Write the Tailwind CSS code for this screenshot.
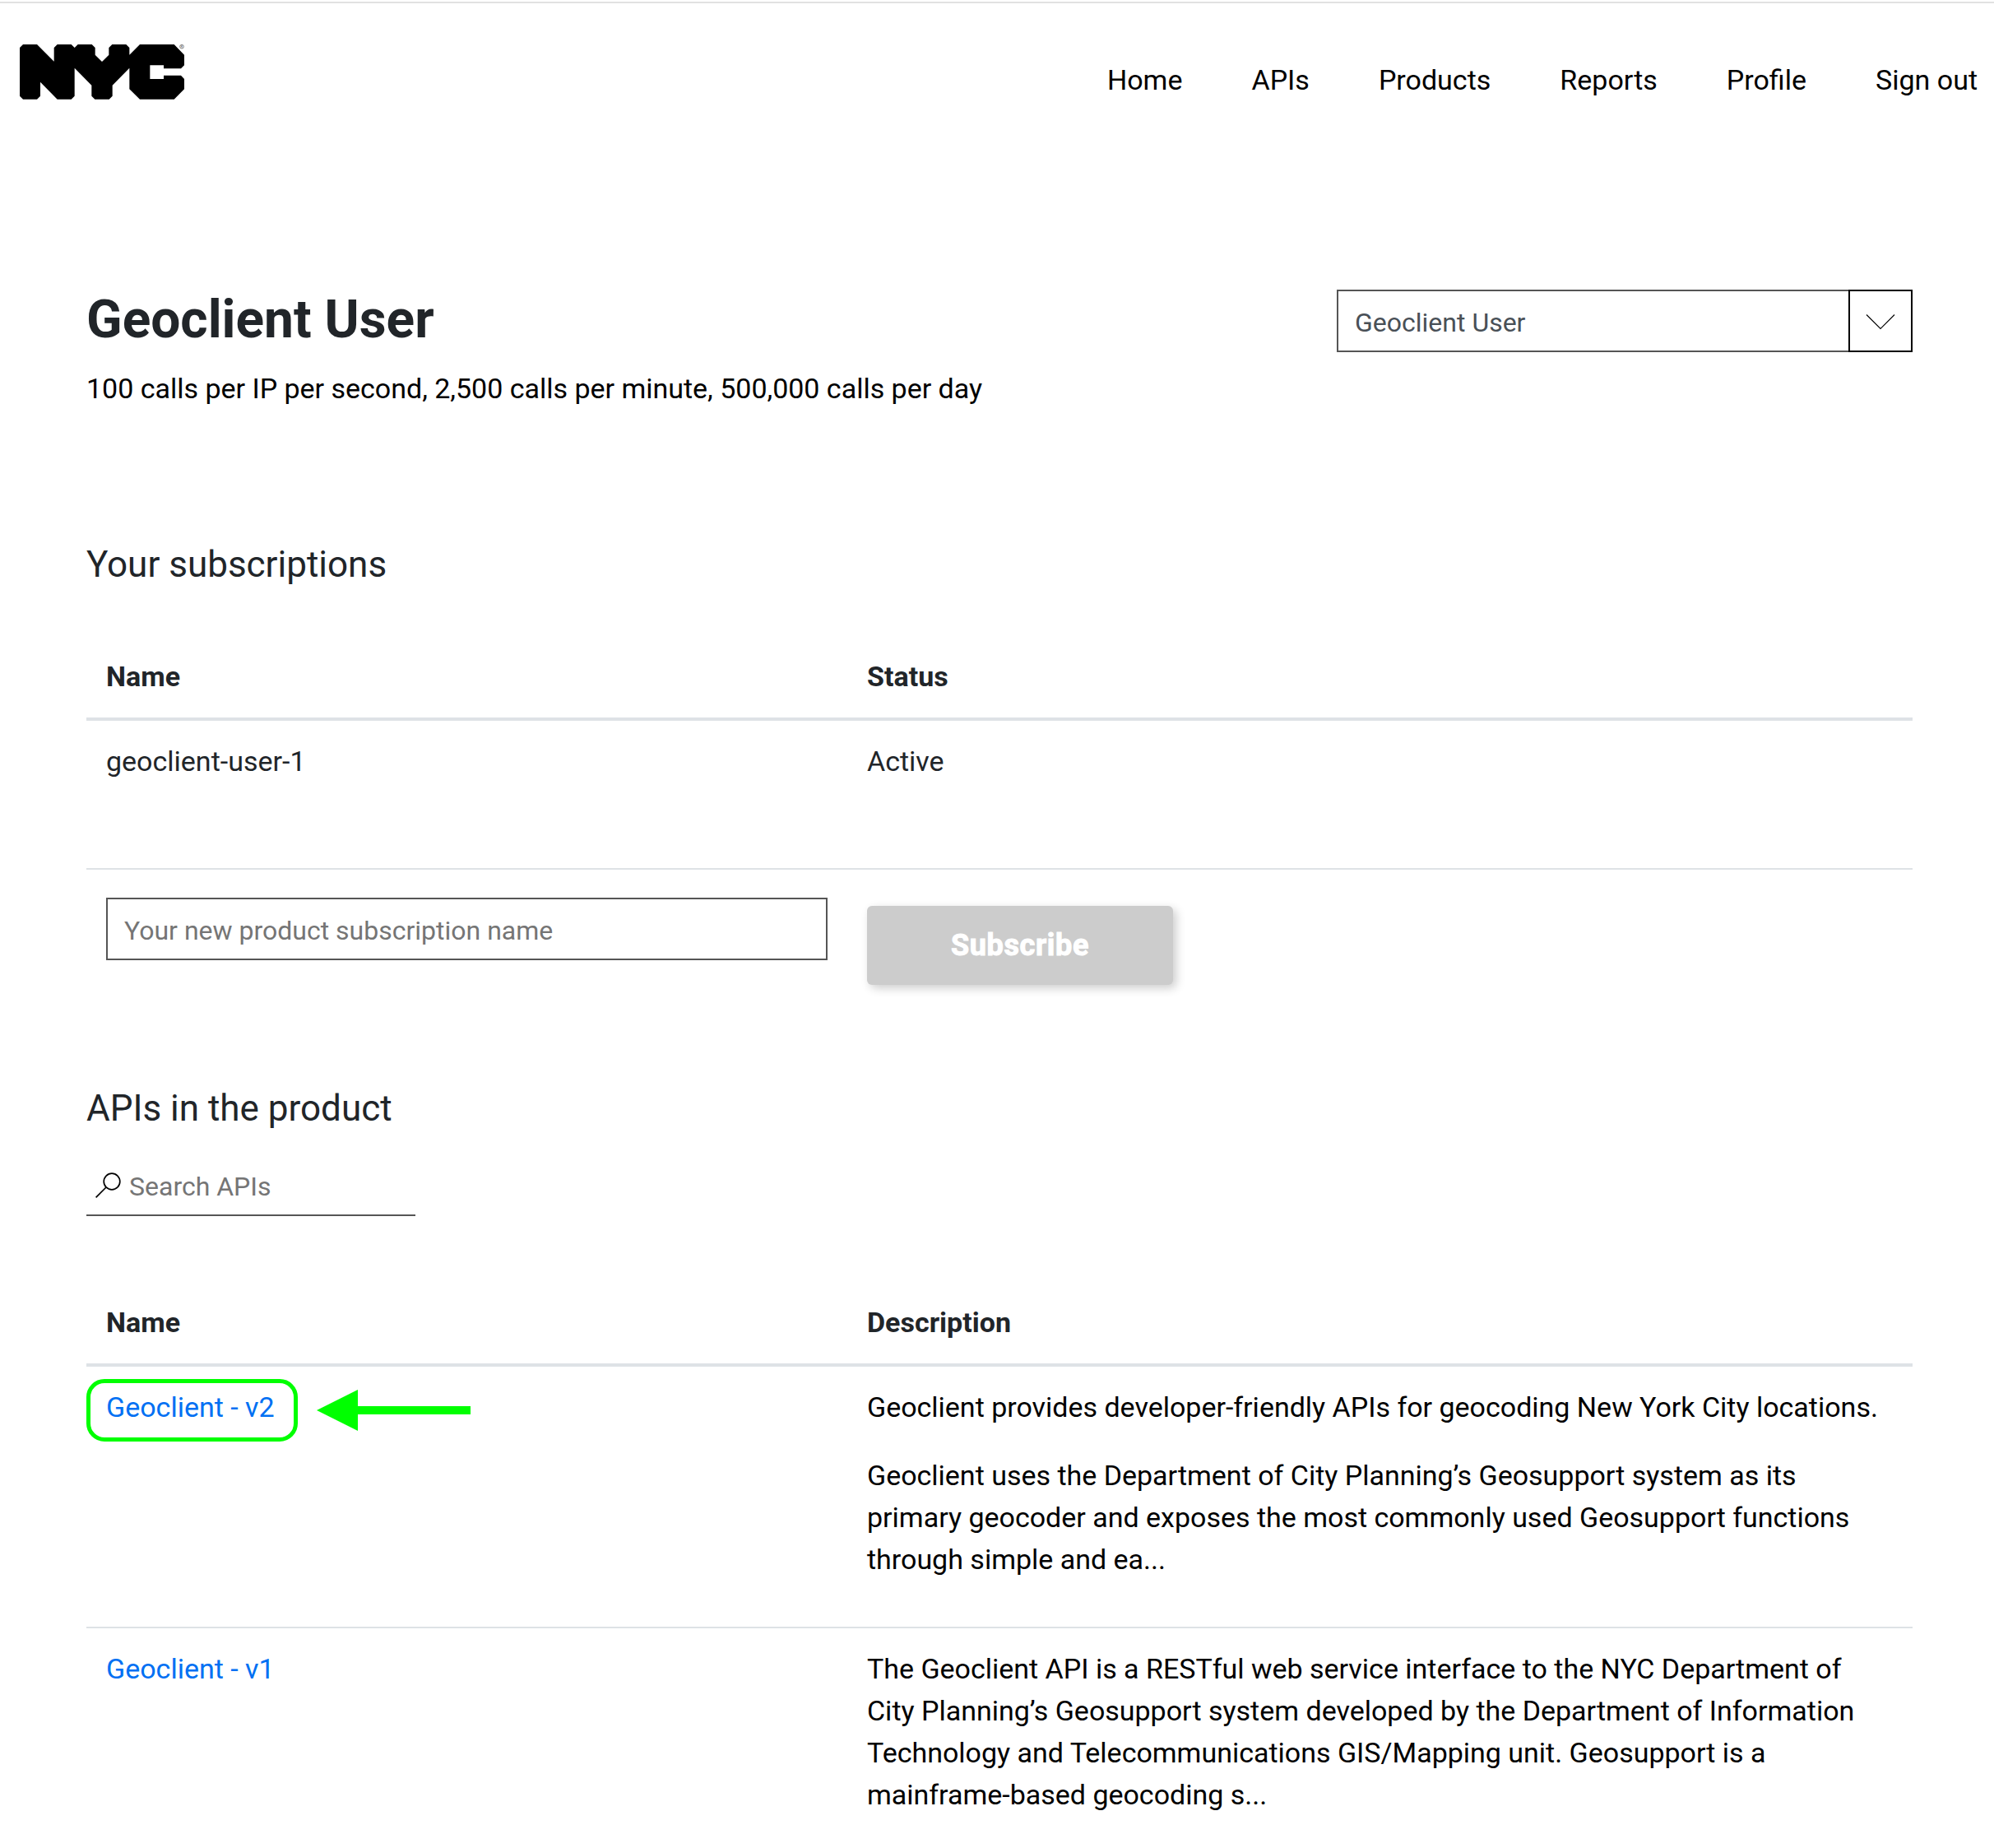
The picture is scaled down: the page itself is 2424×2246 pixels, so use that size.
<!DOCTYPE html>
<html lang="en">
<head>
<meta charset="utf-8">
<title>Geoclient User</title>
<script src="https://cdn.jsdelivr.net/npm/@tailwindcss/browser@4"></script>
</head>
<body class="h-[2246px] w-[2424px] overflow-hidden bg-white font-['Roboto',sans-serif] text-[34px] leading-[51px] text-[#212529]">
<header class="mt-0.5 flex h-[348px] items-start justify-between border-t-2 border-[#e1e1e1] pr-[20px] pl-6">
  <svg class="mt-[50px] h-[67px] w-[201px]" viewBox="72 162 603 201" role="img" aria-label="NYC">
    <path d="M84 162H135L197 224V174L209 162H260L272 174L284 162H335L347 174V200L372 225L397 200V174L409 162H460L472 174V200L510 162H635L672 200V238L660 250H597V238H547V288H597V275H660L672 288V325L635 362H510L472 325V248L410 311V350L398 362H346L334 350V311L272 248V350L260 362H209L147 299V350L135 362H84L72 350V174Z"/>
    <circle cx="663" cy="170" r="7" fill="none" stroke="#666" stroke-width="2.4"/>
    <text x="659" y="174" font-size="11" fill="#444">R</text>
  </svg>
  <nav class="mt-[68px] flex gap-[84px] text-black">
    <a>Home</a><a>APIs</a><a>Products</a><a>Reports</a><a>Profile</a><a>Sign out</a>
  </nav>
</header>
<main class="ml-[105px] w-[2220px]">
  <section class="flex h-[310px] items-start justify-between pt-0.5">
    <div>
      <h1 class="pt-px text-[64px] leading-[72px] font-bold">Geoclient User</h1>
      <p class="mt-[22px] tracking-[-0.015px] text-black">100 calls per IP per second, 2,500 calls per minute, 500,000 calls per day</p>
    </div>
    <div class="flex h-[76px] w-[700px]">
      <div class="flex flex-1 items-center border-2 border-r-0 border-[#555] pt-1 pl-5 text-[32px] text-[#495057]">Geoclient User</div>
      <div class="flex w-[78px] items-center justify-center border-2 border-black pt-0.5">
        <svg class="h-5 w-9" viewBox="0 0 36 20" fill="none" stroke="#000" stroke-width="1.1"><path d="M1 1.5L18 18.5L35 1.5"/></svg>
      </div>
    </div>
  </section>
  <section class="h-[661px]">
    <h2 class="text-[44px] leading-[52px]">Your subscriptions</h2>
    <div class="mt-[61px] grid grid-cols-[925px_1fr]">
      <div class="col-span-2 grid grid-cols-subgrid border-b-4 border-[#dee2e6] font-bold">
        <div class="p-6">Name</div><div class="p-6">Status</div>
      </div>
      <div class="col-span-2 grid h-[181px] grid-cols-subgrid border-b-2 border-[#dee2e6]">
        <div class="p-6">geoclient-user-1</div><div class="p-6">Active</div>
      </div>
      <div class="px-6 pt-[34px]">
        <div class="flex h-[76px] items-center border-2 border-[#555] pt-1 pl-5 text-[32px] text-[#757575]">Your new product subscription name</div>
      </div>
      <div class="px-6 pt-11">
        <button class="flex h-24 w-[372px] items-center justify-center rounded-md bg-[#ccc] text-[36px] font-bold tracking-[0.65px] text-white shadow-[4px_4px_12px_rgba(0,0,0,0.2)] [-webkit-text-stroke:1px_white]">Subscribe</button>
      </div>
    </div>
  </section>
  <section>
    <h2 class="text-[44px] leading-[52px]">APIs in the product</h2>
    <div class="mt-[29px] flex h-[76px] w-[400px] items-center border-b-2 border-[#555] pt-1 text-[32px] text-[#757575]">
      <svg class="mr-[9px] ml-[11px] h-8 w-8" viewBox="0 0 32 32" fill="none" stroke="#000" stroke-width="1.7"><circle cx="20" cy="11" r="9.8"/><path d="M13 18L.6 30.4"/></svg>
      <span class="pt-0.5">Search APIs</span>
    </div>
    <div class="mt-20 grid grid-cols-[925px_1fr]">
      <div class="col-span-2 grid grid-cols-subgrid border-b-4 border-[#dee2e6] font-bold">
        <div class="p-6">Name</div><div class="p-6">Description</div>
      </div>
      <div class="relative col-span-2 grid h-[318px] grid-cols-subgrid border-b-2 border-[#dee2e6]">
        <div class="p-6 text-[#0070f3]">Geoclient - v2</div>
        <div class="flex flex-col gap-8 p-6 tracking-[-0.01px] text-black">
          <p>Geoclient provides developer-friendly APIs for geocoding New York City locations.</p>
          <p>Geoclient uses the Department of City Planning’s Geosupport system as its<br>primary geocoder and exposes the most commonly used Geosupport functions<br>through simple and ea...</p>
        </div>
        <div class="absolute top-[15px] left-0 h-[76px] w-[257px] rounded-[22px] border-[5px] border-[#0f0]"></div>
        <svg class="absolute top-7 left-[280px] h-[50px] w-[187px]" viewBox="0 0 187 50" fill="#0f0"><path d="M0 25L50 0V20H187V30H50V50Z"/></svg>
      </div>
      <div class="p-6 text-[#0070f3]">Geoclient - v1</div>
      <div class="p-6 tracking-[-0.01px] text-black">
        <p>The Geoclient API is a RESTful web service interface to the NYC Department of<br>City Planning’s Geosupport system developed by the Department of Information<br>Technology and Telecommunications GIS/Mapping unit. Geosupport is a<br>mainframe-based geocoding s...</p>
      </div>
    </div>
  </section>
</main>
</body>
</html>
